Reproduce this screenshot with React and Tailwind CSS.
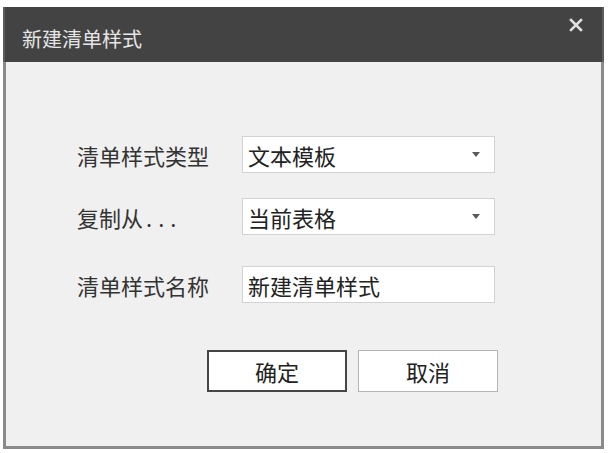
import React from 'react';

const font = { fontFamily: '"Noto Sans CJK SC", "Noto Sans", sans-serif' };

// small dropdown caret like the native combobox
const Caret = () => (
  <svg width="8" height="5" viewBox="0 0 8 5" className="shrink-0">
    <path d="M0 0 L8 0 L4 5 Z" fill="#5a5a5a" />
  </svg>
);

const Field = ({ label, value, select, className }) => (
  <div className={`flex items-center ${className || ''}`}>
    <div className="w-[165px] text-[22px] text-[#333333] leading-none">{label}</div>
    <div className="w-[253px] h-[37px] bg-white border border-[#d2d2d2] flex items-center pl-[5px] pr-[14px]">
      <span className="flex-1 text-[22px] text-[#222222] leading-none">{value}</span>
      {select && <Caret />}
    </div>
  </div>
);

export default function App() {
  return (
    <div className="w-[610px] h-[453px] bg-white pt-[7px] pl-[3px]" style={font}>
      <div className="w-[601px] h-[442px] flex flex-col">
        <div className="h-[55px] bg-[#434343] flex justify-between border-x-[2px] border-[#5c5c5c]">
          <div className="pl-[17px] pt-[22px] text-[20px] text-[#e6e6e6] leading-none">新建清单样式</div>
          <div className="pr-[19px] pt-[11px]">
            <svg width="14" height="14" viewBox="0 0 14 14">
              <path d="M2 2 L12 12 M12 2 L2 12" stroke="#e0e0e0" strokeWidth="2.6" strokeLinecap="square" />
            </svg>
          </div>
        </div>
        <div className="flex-1 bg-[#f0f0f0] border-x-[3px] border-b-[3px] border-[#8a8a8a] pl-[71px] pt-[74px]">
          <Field label="清单样式类型" value="文本模板" select />
          <Field
            label={<>复制从<span className="tracking-[6px] ml-[3px]">...</span></>}
            value="当前表格"
            select
            className="mt-[25px]"
          />
          <Field label="清单样式名称" value="新建清单样式" className="mt-[31px]" />
          <div className="flex gap-[11px] mt-[47px] ml-[130px]">
            <button className="w-[140px] h-[42px] bg-white border-2 border-[#454545] text-[22px] text-[#222222] leading-none">确定</button>
            <button className="w-[140px] h-[42px] bg-white border border-[#b4b4b4] text-[22px] text-[#222222] leading-none">取消</button>
          </div>
        </div>
      </div>
    </div>
  );
}
